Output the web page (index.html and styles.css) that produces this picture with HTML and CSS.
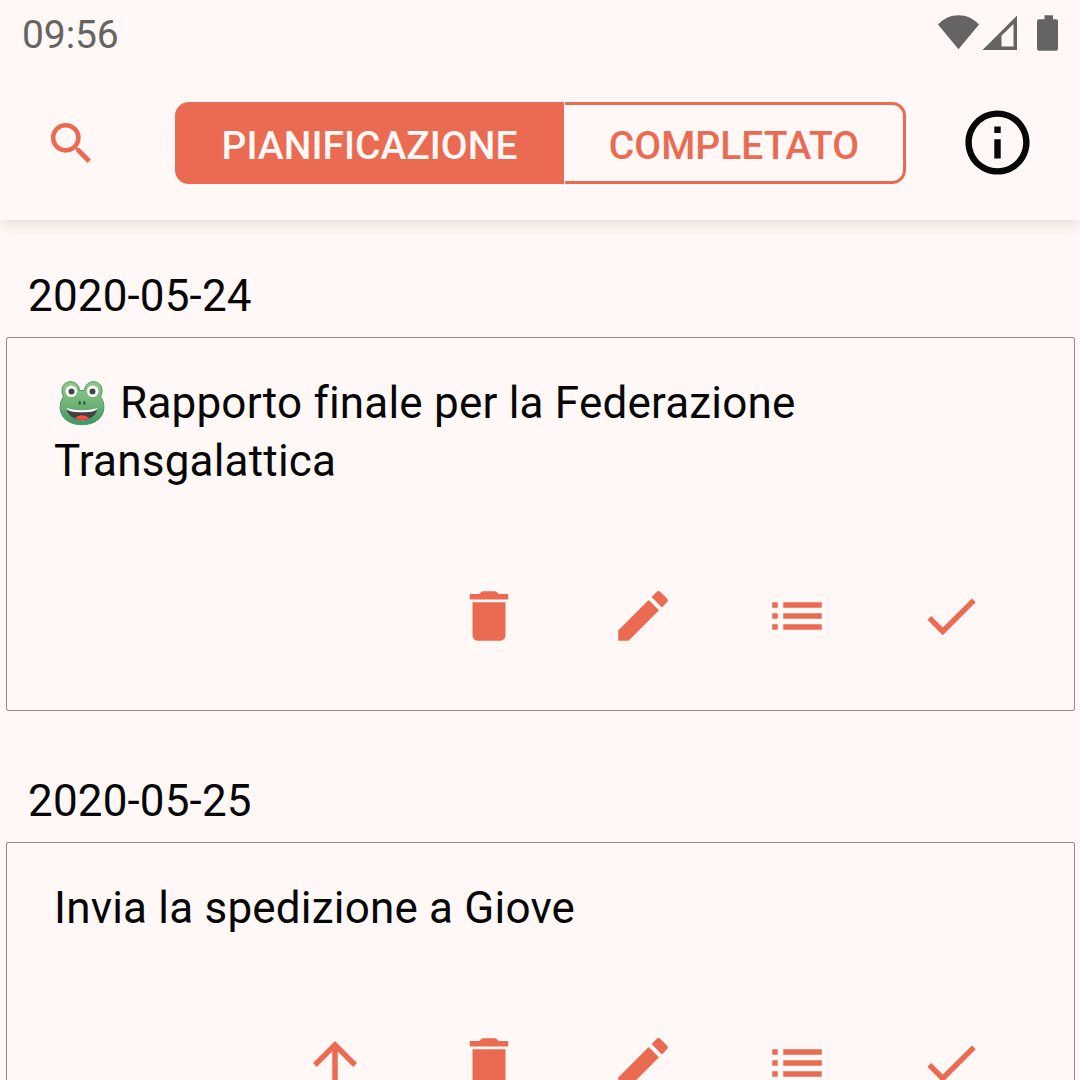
FILE: index.html
```html
<!DOCTYPE html>
<html lang="it">
<head>
<meta charset="utf-8">
<title>Pianificazione</title>
<link rel="stylesheet" href="styles.css">
</head>
<body>
<svg class="defs" aria-hidden="true">
  <symbol id="delete" viewBox="0 0 24 24"><path d="M6 19c0 1.1.9 2 2 2h8c1.1 0 2-.9 2-2V7H6v12zM19 4h-3.500l-.7-.7C14.600 3.100 14.300 3 14.100 3H9.900c-.2 0-.5.1-.7.3L8.500 4H5v2h14V4z"/></symbol>
  <symbol id="edit" viewBox="0 0 24 24"><path d="M3 17.250V21h3.750L17.810 9.940l-3.750-3.750L3 17.250zM20.710 7.040a1 1 0 0 0 0-1.410l-2.340-2.340a1 1 0 0 0-1.410 0l-1.830 1.830 3.750 3.750 1.830-1.830z"/></symbol>
  <symbol id="list" viewBox="0 0 24 24"><path d="M3 13h2v-2H3v2zm0 4h2v-2H3v2zm0-8h2V7H3v2zm4 4h14v-2H7v2zm0 4h14v-2H7v2zM7 7v2h14V7H7z"/></symbol>
  <symbol id="check" viewBox="0 0 24 24"><path d="M9 16.200L4.800 12l-1.400 1.400L9 19 21 7l-1.400-1.400L9 16.200z"/></symbol>
  <symbol id="up" viewBox="0 0 24 24"><path d="M4 12l1.410 1.410L11 7.830V20h2V7.830l5.580 5.590L20 12l-8-8-8 8z"/></symbol>
</svg>
<div class="screen">
  <header class="top">
    <div class="status">
      <span class="clock">09:56</span>
      <svg class="status-icons" viewBox="0 0 122 36">
        <path d="M0 9.500C11-3 30-3 41 9.500L20.500 34.300z"/>
        <path fill-rule="evenodd" d="M44.500 35L79 .5V35zM63.500 31.500H75.500V9L63.500 20.800z"/>
        <path d="M105.500 0h8.500v4h3a2 2 0 0 1 2 2v27.500a2 2 0 0 1-2 2h-17a2 2 0 0 1-2-2V6a2 2 0 0 1 2-2h5.500z" transform="translate(1 .3)"/>
      </svg>
    </div>
    <nav class="toolbar">
      <svg class="search" viewBox="0 0 24 24"><path d="M15.500 14h-.79l-.28-.27A6.471 6.471 0 0 0 16 9.500 6.500 6.500 0 1 0 9.500 16c1.610 0 3.090-.59 4.230-1.570l.27.28v.79l5 4.990L20.490 19l-4.990-5zm-6 0C7.010 14 5 11.990 5 9.500S7.010 5 9.500 5 14 7.010 14 9.500 11.990 14 9.500 14z"/></svg>
      <div class="tabs">
        <div class="tab tab-active"><span>PIANIFICAZIONE</span></div>
        <div class="tab"><span>COMPLETATO</span></div>
      </div>
      <svg class="info" viewBox="0 0 24 24"><path d="M11 7h2v2h-2zm0 4h2v6h-2zm1-9C6.480 2 2 6.480 2 12s4.480 10 10 10 10-4.480 10-10S17.520 2 12 2zm0 18c-4.410 0-8-3.590-8-8s3.590-8 8-8 8 3.590 8 8-3.590 8-8 8z"/></svg>
    </nav>
  </header>
  <main class="plan">
    <section class="day">
      <h2 class="date">2020-05-24</h2>
      <article class="card card-tall">
        <p class="task"><svg class="frog" role="img" aria-label="🐸" viewBox="0 0 46 45">
          <defs><linearGradient id="skin" x1="0" y1="0" x2="0" y2="1"><stop offset="0" stop-color="#91c985"/><stop offset=".5" stop-color="#70b477"/><stop offset="1" stop-color="#3d9762"/></linearGradient></defs>
          <path fill="url(#skin)" stroke="#43986a" d="M20.500 9.600Q23 9.200 25.500 9.600C26-2.400 43.600-2.400 43 10Q43 13 41.500 15.500C49 26 44.500 43.700 23 43.700S-3 26 4.500 15.500Q3 13 3 10C2.400-2.400 20-2.400 20.500 9.600z"/>
          <circle cx="12.300" cy="10.300" r="5.800" fill="#fff"/><circle cx="33.700" cy="10.300" r="5.800" fill="#fff"/>
          <circle cx="12.500" cy="10.400" r="3" fill="#454545"/><circle cx="33.500" cy="10.400" r="3" fill="#454545"/>
          <ellipse cx="20.700" cy="22" rx="1.200" ry="1.900" fill="#2f5745"/><ellipse cx="25.300" cy="22" rx="1.200" ry="1.900" fill="#2f5745"/>
          <path fill="#424242" d="M7.200 27.300Q23 34 38.800 27.300C37 35 31 39 23 39S9 35 7.200 27.300z"/>
          <path fill="#fff" d="M7.200 27Q23 31.500 38.800 27Q37.800 31.300 23 31.300T7.200 27z"/>
          <path fill="#ff4b43" d="M15.600 37.300Q19 34.300 23 34.300T30.400 37.300Q27 39 23 39T15.600 37.300z"/>
        </svg> Rapporto finale per la Federazione Transgalattica</p>
        <div class="actions">
          <svg class="icon"><use href="#delete"/></svg>
          <svg class="icon"><use href="#edit"/></svg>
          <svg class="icon"><use href="#list"/></svg>
          <svg class="icon"><use href="#check"/></svg>
        </div>
      </article>
    </section>
    <section class="day">
      <h2 class="date">2020-05-25</h2>
      <article class="card">
        <p class="task">Invia la spedizione a Giove</p>
        <div class="actions">
          <svg class="icon"><use href="#up"/></svg>
          <svg class="icon"><use href="#delete"/></svg>
          <svg class="icon"><use href="#edit"/></svg>
          <svg class="icon"><use href="#list"/></svg>
          <svg class="icon"><use href="#check"/></svg>
        </div>
      </article>
    </section>
  </main>
</div>
</body>
</html>
```
FILE: styles.css
```css
* { box-sizing: border-box; }

body {
  margin: 0;
  background: #fff8f6;
  color: #060706;
  font-family: Roboto, sans-serif;
}

svg { display: block; flex: none; }

.defs { display: none; }

.screen {
  height: 1080px;
  overflow: hidden;
}

.top {
  height: 220px;
  box-shadow: 0 3px 15px rgba(50, 45, 20, .14);
  clip-path: inset(0 0 -20px 0);
}

.status {
  display: flex;
  justify-content: space-between;
  height: 66px;
  padding: 15px 20px 0 22px;
  color: #666462;
}

.clock {
  font-size: 39px;
  line-height: 40px;
  letter-spacing: -.1px;
}

.status-icons {
  width: 122px;
  height: 36px;
  fill: #666462;
}

.toolbar {
  display: flex;
  align-items: center;
  justify-content: space-between;
  height: 154px;
  padding: 0 44px;
}

.search {
  width: 55px;
  height: 55px;
  fill: #ea6b51;
}

.tabs {
  display: flex;
  width: 731px;
  height: 82px;
  margin-left: 22px;
}

.tab {
  display: flex;
  align-items: center;
  justify-content: center;
  width: 341px;
  border: 3px solid #ea6b51;
  border-left-width: 0;
  border-radius: 0 14px 14px 0;
  color: #ea6b51;
  font-size: 39px;
  font-weight: 500;
  line-height: 46px;
  padding: 6px 0 0 1px;
}

.tab-active {
  width: 389px;
  margin-right: 1px;
  border-left-width: 3px;
  border-radius: 14px 0 0 14px;
  background: #ea6b51;
  color: #fff8f6;
}

.info {
  width: 77px;
  height: 77px;
  margin-bottom: 2px;
  fill: #060706;
}

.day {
  padding: 45px 5px 0 6px;
}

.day + .day { padding-top: 59px; }

.date {
  margin: 0;
  padding: 5px 0 15px 22px;
  font-size: 44px;
  font-weight: 400;
  line-height: 52px;
  letter-spacing: .15px;
}

.card {
  display: flex;
  flex-direction: column;
  justify-content: space-between;
  height: 316px;
  padding: 36px 90px 61px 47px;
  border: 1px solid #918c8a;
  border-radius: 2px;
}

.card-tall { height: 374px; }

.task {
  margin: 0;
  font-size: 44px;
  line-height: 58px;
  letter-spacing: .2px;
}

.frog {
  display: inline-block;
  width: 46px;
  height: 45px;
  margin: 0 4px 0 5px;
  vertical-align: -8px;
}

.actions {
  display: flex;
  justify-content: flex-end;
  gap: 88px;
}

.icon {
  width: 66px;
  height: 66px;
  fill: #ea6b51;
}
```
